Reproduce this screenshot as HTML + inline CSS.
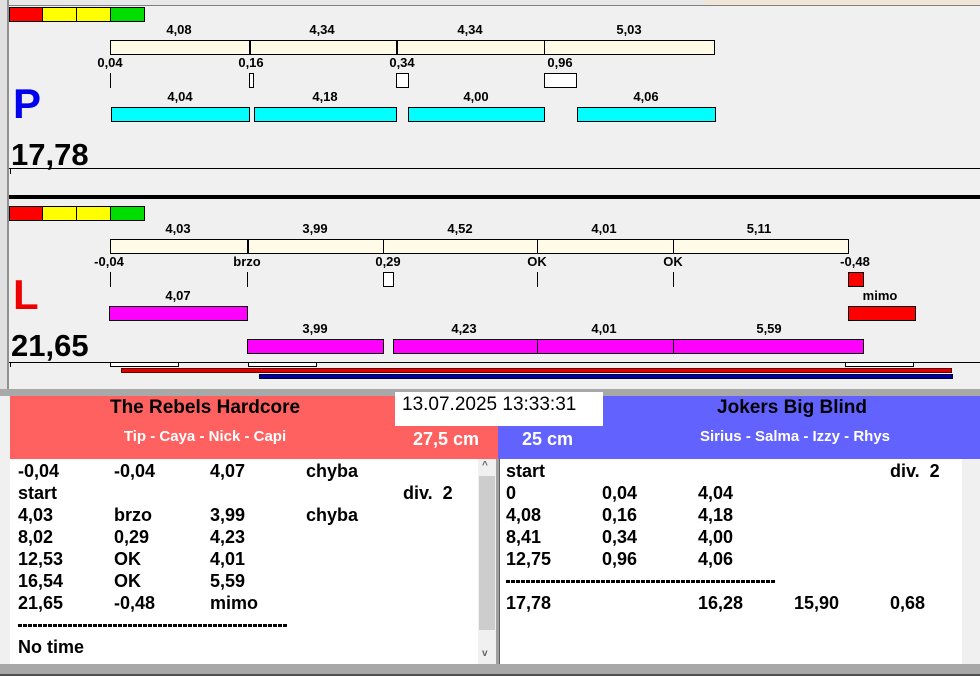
<!DOCTYPE html>
<html><head><meta charset="utf-8"><style>
*{margin:0;padding:0;box-sizing:border-box}
body{width:980px;height:676px;position:relative;overflow:hidden;background:#f0f0f0;font-family:"Liberation Sans",Arial,sans-serif;font-weight:bold;color:#000}
div,span{position:absolute}
.l{font-size:13px;transform:translateX(-50%);white-space:nowrap;line-height:14px}
.cr{background:#fffbe6;border:1px solid #000;height:15px}
.cy{background:#00ffff;border:1px solid #000;height:15px}
.mg{background:#ff00ff;border:1px solid #000;height:15px}
.vl{width:1px;background:#000}
.wr{background:#fff;border:1px solid #000}
.t{font-size:18px;line-height:22px;white-space:nowrap}
.d{font-size:14px;line-height:22px;white-space:nowrap;letter-spacing:0px}
</style></head><body>
<div style="left:0;top:0;width:980px;height:6px;background:#e8e8e8"></div>
<div style="left:705px;top:0;width:275px;height:5px;background:#efe6d8"></div>
<div style="left:0;top:0;width:9px;height:390px;background:#e0e0e0;border-right:2px solid #909090"></div>
<div style="left:9px;top:5px;width:971px;height:1px;background:#808080"></div>

<!-- P panel -->
<div style="left:9px;top:7px;width:34px;height:15px;background:#f00;border:1px solid #000"></div>
<div style="left:42px;top:7px;width:35px;height:15px;background:#ff0;border:1px solid #000"></div>
<div style="left:76px;top:7px;width:35px;height:15px;background:#ff0;border:1px solid #000"></div>
<div style="left:110px;top:7px;width:35px;height:15px;background:#0d0;border:1px solid #000"></div>

<span class="l" style="left:179px;top:23px">4,08</span>
<span class="l" style="left:322px;top:23px">4,34</span>
<span class="l" style="left:470px;top:23px">4,34</span>
<span class="l" style="left:629px;top:23px">5,03</span>
<div class="cr" style="left:110px;top:40px;width:605px"></div>
<div class="vl" style="left:249px;top:40px;height:15px;width:2px"></div>
<div class="vl" style="left:396px;top:40px;height:15px;width:2px"></div>
<div class="vl" style="left:544px;top:40px;height:15px"></div>
<span class="l" style="left:110px;top:56px">0,04</span>
<span class="l" style="left:251px;top:56px">0,16</span>
<span class="l" style="left:402px;top:56px">0,34</span>
<span class="l" style="left:560px;top:56px">0,96</span>
<div class="vl" style="left:110px;top:73px;height:15px"></div>
<div class="wr" style="left:249px;top:73px;width:5px;height:15px"></div>
<div class="wr" style="left:396px;top:73px;width:13px;height:15px"></div>
<div class="wr" style="left:544px;top:73px;width:33px;height:15px"></div>
<span class="l" style="left:180px;top:90px">4,04</span>
<span class="l" style="left:325px;top:90px">4,18</span>
<span class="l" style="left:476px;top:90px">4,00</span>
<span class="l" style="left:646px;top:90px">4,06</span>
<div class="cy" style="left:111px;top:107px;width:139px"></div>
<div class="cy" style="left:254px;top:107px;width:143px"></div>
<div class="cy" style="left:408px;top:107px;width:137px"></div>
<div class="cy" style="left:577px;top:107px;width:139px"></div>
<span style="left:13px;top:80px;font-size:42px;color:#0000ee;line-height:48px">P</span>
<span style="left:11px;top:137px;font-size:31px;line-height:36px">17,78</span>
<div style="left:9px;top:168px;width:971px;height:1px;background:#000"></div>
<div style="left:10px;top:168px;width:1px;height:6px;background:#000"></div>
<div style="left:9px;top:195px;width:971px;height:4px;background:#000"></div>

<!-- L panel -->
<div style="left:9px;top:206px;width:34px;height:15px;background:#f00;border:1px solid #000"></div>
<div style="left:42px;top:206px;width:35px;height:15px;background:#ff0;border:1px solid #000"></div>
<div style="left:76px;top:206px;width:35px;height:15px;background:#ff0;border:1px solid #000"></div>
<div style="left:110px;top:206px;width:35px;height:15px;background:#0d0;border:1px solid #000"></div>
<span class="l" style="left:178px;top:222px">4,03</span>
<span class="l" style="left:315px;top:222px">3,99</span>
<span class="l" style="left:460px;top:222px">4,52</span>
<span class="l" style="left:604px;top:222px">4,01</span>
<span class="l" style="left:759px;top:222px">5,11</span>
<div class="cr" style="left:110px;top:239px;width:739px"></div>
<div class="vl" style="left:247px;top:239px;height:15px;width:2px"></div>
<div class="vl" style="left:383px;top:239px;height:15px"></div>
<div class="vl" style="left:537px;top:239px;height:15px"></div>
<div class="vl" style="left:673px;top:239px;height:15px"></div>
<span class="l" style="left:109px;top:255px">-0,04</span>
<span class="l" style="left:247px;top:255px">brzo</span>
<span class="l" style="left:388px;top:255px">0,29</span>
<span class="l" style="left:537px;top:255px">OK</span>
<span class="l" style="left:673px;top:255px">OK</span>
<span class="l" style="left:855px;top:255px">-0,48</span>
<div class="vl" style="left:110px;top:272px;height:15px"></div>
<div class="vl" style="left:247px;top:272px;height:15px"></div>
<div class="wr" style="left:383px;top:272px;width:11px;height:15px"></div>
<div class="vl" style="left:537px;top:272px;height:15px"></div>
<div class="vl" style="left:673px;top:272px;height:15px"></div>
<div style="left:848px;top:272px;width:16px;height:15px;background:#f00;border:1px solid #000"></div>
<span class="l" style="left:178px;top:289px">4,07</span>
<span class="l" style="left:880px;top:289px">mimo</span>
<div class="mg" style="left:109px;top:306px;width:139px"></div>
<div style="left:848px;top:306px;width:68px;height:15px;background:#f00;border:1px solid #000"></div>
<span class="l" style="left:315px;top:322px">3,99</span>
<span class="l" style="left:464px;top:322px">4,23</span>
<span class="l" style="left:604px;top:322px">4,01</span>
<span class="l" style="left:769px;top:322px">5,59</span>
<div class="mg" style="left:247px;top:339px;width:137px"></div>
<div class="mg" style="left:393px;top:339px;width:471px"></div>
<div class="vl" style="left:537px;top:339px;height:15px"></div>
<div class="vl" style="left:673px;top:339px;height:15px"></div>
<span style="left:13px;top:274px;font-size:42px;color:#ee0000;line-height:42px">L</span>
<span style="left:11px;top:328px;font-size:31px;line-height:36px">21,65</span>
<div style="left:9px;top:362px;width:971px;height:1px;background:#000"></div>
<div style="left:10px;top:362px;width:1px;height:5px;background:#000"></div>
<div class="wr" style="left:110px;top:362px;width:69px;height:5px"></div>
<div class="wr" style="left:248px;top:362px;width:69px;height:5px"></div>
<div class="wr" style="left:845px;top:362px;width:69px;height:5px"></div>
<div style="left:121px;top:368px;width:831px;height:5px;background:#d00;border:1px solid #600"></div>
<div style="left:259px;top:374px;width:694px;height:5px;background:#00a;border:1px solid #003"></div>
<div style="left:0;top:389px;width:980px;height:7px;background:#a8a8a8"></div>

<!-- header -->
<div style="left:10px;top:396px;width:488px;height:63px;background:#ff6060"></div>
<div style="left:498px;top:396px;width:482px;height:63px;background:#6262ff"></div>
<div style="left:395px;top:392px;width:208px;height:34px;background:#fff"></div>
<span style="left:402px;top:394px;font-size:19px;font-weight:normal;line-height:22px">13.07.2025 13:33:31</span>
<span class="t" style="left:205px;top:397px;transform:translateX(-50%);font-size:19px">The Rebels Hardcore</span>
<span class="t" style="left:205px;top:426px;transform:translateX(-50%);font-size:15px;color:#fff">Tip - Caya - Nick - Capi</span>
<span class="t" style="left:413px;top:428px;color:#fff">27,5 cm</span>
<span class="t" style="left:522px;top:428px;color:#fff">25 cm</span>
<span class="t" style="left:792px;top:397px;transform:translateX(-50%);font-size:19px">Jokers Big Blind</span>
<span class="t" style="left:795px;top:426px;transform:translateX(-50%);font-size:15px;color:#fff">Sirius - Salma - Izzy - Rhys</span>

<!-- tables -->
<div style="left:10px;top:459px;width:468px;height:205px;background:#fff"></div>
<div style="left:478px;top:459px;width:18px;height:205px;background:#f0f0f0"></div>
<div style="left:479px;top:476px;width:16px;height:154px;background:#cdcdcd"></div>
<span style="left:482px;top:460px;font-size:10px;color:#666">^</span>
<span style="left:482px;top:648px;font-size:10px;color:#666">v</span>
<div style="left:496px;top:459px;width:4px;height:205px;background:#a0a0a0;border-right:1px solid #606060"></div>
<div style="left:500px;top:459px;width:462px;height:205px;background:#fff"></div>
<div style="left:962px;top:459px;width:18px;height:205px;background:#f0f0f0"></div>
<div style="left:0;top:664px;width:980px;height:12px;background:#a8a8a8;border-bottom:2px solid #505050"></div>

<span class="t" style="left:18px;top:460px">-0,04</span><span class="t" style="left:114px;top:460px">-0,04</span><span class="t" style="left:210px;top:460px">4,07</span><span class="t" style="left:306px;top:460px">chyba</span>
<span class="t" style="left:18px;top:482px">start</span><span class="t" style="left:403px;top:482px">div.&nbsp;&nbsp;2</span>
<span class="t" style="left:18px;top:504px">4,03</span><span class="t" style="left:114px;top:504px">brzo</span><span class="t" style="left:210px;top:504px">3,99</span><span class="t" style="left:306px;top:504px">chyba</span>
<span class="t" style="left:18px;top:526px">8,02</span><span class="t" style="left:114px;top:526px">0,29</span><span class="t" style="left:210px;top:526px">4,23</span>
<span class="t" style="left:18px;top:548px">12,53</span><span class="t" style="left:114px;top:548px">OK</span><span class="t" style="left:210px;top:548px">4,01</span>
<span class="t" style="left:18px;top:570px">16,54</span><span class="t" style="left:114px;top:570px">OK</span><span class="t" style="left:210px;top:570px">5,59</span>
<span class="t" style="left:18px;top:592px">21,65</span><span class="t" style="left:114px;top:592px">-0,48</span><span class="t" style="left:210px;top:592px">mimo</span>
<div style="left:18px;top:624px;width:270px;height:3px;background:repeating-linear-gradient(90deg,#000 0 4px,transparent 4px 5px)"></div>
<span class="t" style="left:18px;top:636px">No time</span>

<span class="t" style="left:506px;top:460px">start</span><span class="t" style="left:890px;top:460px">div.&nbsp;&nbsp;2</span>
<span class="t" style="left:506px;top:482px">0</span><span class="t" style="left:602px;top:482px">0,04</span><span class="t" style="left:698px;top:482px">4,04</span>
<span class="t" style="left:506px;top:504px">4,08</span><span class="t" style="left:602px;top:504px">0,16</span><span class="t" style="left:698px;top:504px">4,18</span>
<span class="t" style="left:506px;top:526px">8,41</span><span class="t" style="left:602px;top:526px">0,34</span><span class="t" style="left:698px;top:526px">4,00</span>
<span class="t" style="left:506px;top:548px">12,75</span><span class="t" style="left:602px;top:548px">0,96</span><span class="t" style="left:698px;top:548px">4,06</span>
<div style="left:506px;top:580px;width:270px;height:3px;background:repeating-linear-gradient(90deg,#000 0 4px,transparent 4px 5px)"></div>
<span class="t" style="left:506px;top:592px">17,78</span><span class="t" style="left:698px;top:592px">16,28</span><span class="t" style="left:794px;top:592px">15,90</span><span class="t" style="left:890px;top:592px">0,68</span>
</body></html>
